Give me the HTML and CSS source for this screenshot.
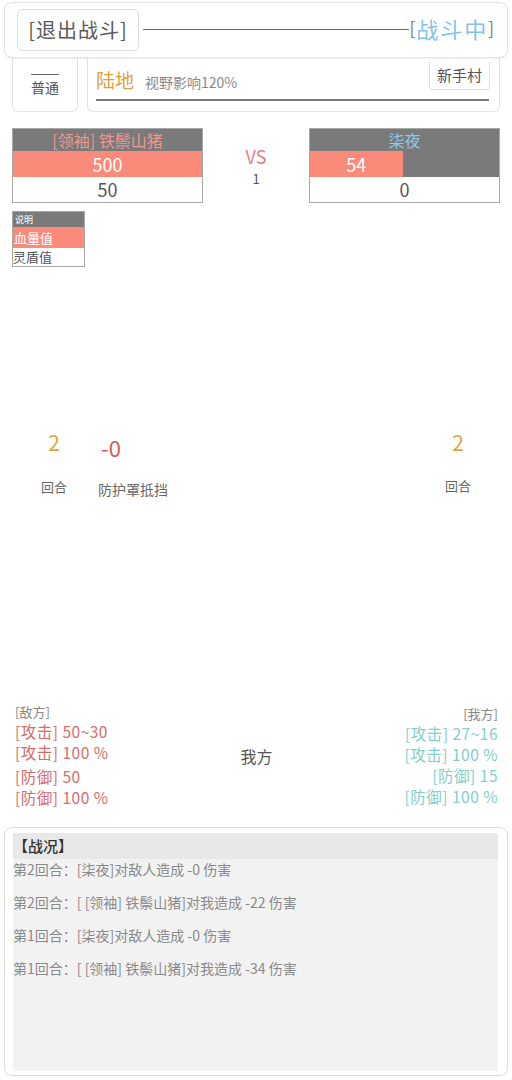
FILE: index.html
```html
<!DOCTYPE html>
<html lang="zh">
<head>
<meta charset="utf-8">
<title>战斗</title>
<link rel="stylesheet" href="styles.css">
</head>
<body>
<div class="page">
  <div class="top">
    <div class="exit">[退出战斗]</div>
    <div class="rule"></div>
    <div class="status"><span class="br">[</span><span class="fighting">战斗中</span><span class="br">]</span></div>
  </div>

  <div class="info">
    <div class="mode"><span class="mode-t">普通</span></div>
    <div class="terrain">
      <div class="terrain-row">
        <span class="land">陆地</span>
        <span class="vis">视野影响120%</span>
        <span class="village">新手村</span>
      </div>
      <div class="terrain-line"></div>
    </div>
  </div>

  <div class="bars">
    <div class="unit">
      <div class="u-name enemy-name">[领袖] 铁鬃山猪</div>
      <div class="u-hp"><div class="hp-fill" style="width:100%">500</div></div>
      <div class="u-sh">50</div>
    </div>
    <div class="vs">
      <div class="vs-t">VS</div>
      <div class="vs-n">1</div>
    </div>
    <div class="unit">
      <div class="u-name self-name">柒夜</div>
      <div class="u-hp"><div class="hp-fill" style="width:49%">54</div></div>
      <div class="u-sh">0</div>
    </div>
  </div>

  <div class="legend">
    <div class="lg-head">说明</div>
    <div class="lg-hp">血量值</div>
    <div class="lg-sh">灵盾值</div>
  </div>

  <div class="arena">
    <div class="a-col a-left">
      <div class="a-num">2</div>
      <div class="a-lab">回合</div>
    </div>
    <div class="a-col a-mid">
      <div class="a-dmg">-0</div>
      <div class="a-lab">防护罩抵挡</div>
    </div>
    <div class="a-col a-right">
      <div class="a-num">2</div>
      <div class="a-lab">回合</div>
    </div>
  </div>

  <div class="stats">
    <div class="st-col st-enemy">
      <div class="st-head">[敌方]</div>
      <div class="st-row">[攻击] 50~30</div>
      <div class="st-row">[攻击] 100 %</div>
      <div class="st-row st-gap">[防御] 50</div>
      <div class="st-row">[防御] 100 %</div>
    </div>
    <div class="st-mid">我方</div>
    <div class="st-col st-self">
      <div class="st-head">[我方]</div>
      <div class="st-row">[攻击] 27~16</div>
      <div class="st-row">[攻击] 100 %</div>
      <div class="st-row">[防御] 15</div>
      <div class="st-row">[防御] 100 %</div>
    </div>
  </div>

  <div class="log">
    <div class="log-inner">
      <div class="log-head">【战况】</div>
      <div class="log-line">第2回合：[柒夜]对敌人造成 -0 伤害</div>
      <div class="log-line">第2回合：[ [领袖] 铁鬃山猪]对我造成 -22 伤害</div>
      <div class="log-line">第1回合：[柒夜]对敌人造成 -0 伤害</div>
      <div class="log-line">第1回合：[ [领袖] 铁鬃山猪]对我造成 -34 伤害</div>
    </div>
  </div>
</div>
</body>
</html>
```

FILE: styles.css
```css
* { box-sizing: border-box; }
html, body { margin: 0; padding: 0; background: #fff; }
body {
  font-family: "Noto Sans CJK SC", "Noto Sans", sans-serif;
  color: #555;
  width: 512px;
}
.page { width: 512px; padding-top: 2px; }

/* header */
.top {
  margin: 0 4px 0 4px;
  height: 56px;
  border: 1px solid #e2e2e2;
  border-radius: 8px;
  box-shadow: 0 1px 2px rgba(0,0,0,0.06);
  display: flex;
  align-items: center;
  padding: 0 13px 0 12px;
  position: relative;
  z-index: 2;
  background: #fff;
}
.exit {
  width: 122px;
  height: 42px;
  border: 1px solid #dedede;
  border-radius: 6px;
  font-size: 20px;
  line-height: 40px;
  text-align: center;
  color: #5a5a5a;
  letter-spacing: 1px;
}
.rule {
  flex: 1;
  height: 1px;
  background: #6a6a6a;
  margin-left: 4px;
  margin-top: -2px;
}
.status { font-size: 22px; line-height: 30px; display: flex; align-items: center; margin-top: -4px; }
.status .br { color: #777; font-size: 17px; }
.fighting { color: #84c3e8; letter-spacing: 2px; margin-left: 1px; }

/* info row */
.info {
  display: flex;
  padding: 0 12px;
  gap: 9px;
  height: 54px;
}
.mode {
  width: 66px;
  border: 1px solid #e3e3e3;
  border-top: none;
  border-radius: 0 0 6px 6px;
  display: flex;
  justify-content: center;
  padding-top: 16px;
}
.mode-t {
  align-self: flex-start;
  font-size: 14px;
  line-height: 18px;
  padding-top: 3px;
  border-top: 1px solid #666;
  color: #555;
}
.terrain {
  flex: 1;
  border: 1px solid #e3e3e3;
  border-top: none;
  border-radius: 0 0 6px 6px;
  padding: 0 9px 0 8px;
}
.terrain-row { display: flex; align-items: flex-start; height: 38px; }
.land {
  color: #dca13c;
  font-size: 19px;
  line-height: 24px;
  margin-top: 10px;
}
.vis {
  color: #888;
  font-size: 14px;
  line-height: 18px;
  margin-top: 15px;
  margin-left: 11px;
}
.village {
  margin-left: auto;
  margin-top: 4px;
  width: 61px;
  height: 28px;
  border: 1px solid #e0e0e0;
  border-top: none;
  border-radius: 0 0 4px 4px;
  font-size: 15px;
  line-height: 26px;
  text-align: center;
  color: #555;
}
.terrain-line {
  height: 2px;
  background: #7a7a7a;
  margin-top: 3px;
  margin-right: 1px;
}

/* bars */
.bars {
  display: flex;
  padding: 0 12px;
  margin-top: 16px;
}
.unit {
  width: 191px;
  border: 1px solid #a8a8a8;
}
.u-name {
  height: 22px;
  background: #7a7a7a;
  font-size: 16px;
  line-height: 22px;
  text-align: center;
}
.enemy-name { color: #f0958f; }
.self-name { color: #8fc8ee; }
.u-hp {
  height: 26px;
  background: #7a7a7a;
}
.hp-fill {
  height: 26px;
  background: #fa8b7a;
  color: #fff;
  font-size: 18px;
  line-height: 26px;
  text-align: center;
}
.u-sh {
  height: 25px;
  background: #fff;
  color: #555;
  font-size: 18px;
  line-height: 25px;
  text-align: center;
}
.vs { flex: 1; text-align: center; padding-top: 17px; }
.vs-t { color: #e27f84; font-size: 18px; line-height: 22px; }
.vs-n { color: #555; font-size: 13px; line-height: 18px; margin-top: 3px; }

/* legend */
.legend {
  width: 73px;
  margin: 8px 0 0 12px;
  border: 1px solid #a8a8a8;
}
.lg-head {
  height: 15px;
  background: #7a7a7a;
  color: #fff;
  font-size: 9px;
  line-height: 15px;
  padding-left: 2px;
}
.lg-hp {
  height: 21px;
  background: #fa8b7a;
  color: #fff;
  font-size: 13px;
  line-height: 21px;
  padding-left: 1px;
}
.lg-sh {
  height: 18px;
  background: #fff;
  color: #555;
  font-size: 13px;
  line-height: 18px;
}

/* arena */
.arena {
  display: flex;
  margin-top: 161px;
  height: 270px;
}
.a-col { display: flex; flex-direction: column; }
.a-left { width: 108px; align-items: center; }
.a-mid { flex: 1; align-items: flex-start; margin-left: -10px; }
.a-right { width: 108px; align-items: center; }
.a-num { color: #e0a53e; font-size: 21px; line-height: 28px; height: 28px; }
.a-dmg { color: #d35c5c; font-size: 22px; line-height: 28px; height: 28px; margin-top: 5px; margin-left: 3px; }
.a-lab { color: #666; font-size: 13px; line-height: 20px; margin-top: 21px; }
.a-mid .a-lab { margin-top: 18px; font-size: 14px; }
.a-right .a-lab { margin-top: 20px; }

/* stats */
.stats {
  display: flex;
  padding: 0 14px 0 15px;
  margin-top: 5px;
}
.st-col { width: 150px; }
.st-head { font-size: 13px; line-height: 18px; color: #888; }
.st-row { font-size: 15.5px; line-height: 21px; letter-spacing: 0.5px; white-space: nowrap; }
.st-enemy .st-row { color: #d86c6c; }
.st-enemy .st-row:first-of-type { margin-top: 1px; }
.st-gap { margin-top: 3px; }
.st-self { text-align: right; padding-top: 2px; }
.st-self .st-row { color: #82cfcb; }
.st-mid {
  flex: 1;
  text-align: center;
  font-size: 16px;
  line-height: 22px;
  color: #555;
  padding-top: 42px;
}

/* log */
.log {
  margin: 19px 4px 0 4px;
  height: 249px;
  border: 1px solid #dcdcdc;
  border-radius: 8px;
  padding: 5px 9px 4px 8px;
  box-shadow: 0 1px 2px rgba(0,0,0,0.05);
}
.log-inner {
  height: 238px;
  background: #f2f2f2;
}
.log-head {
  height: 26px;
  background: #e8e8e8;
  color: #333;
  font-size: 15px;
  font-weight: 500;
  line-height: 26px;
}
.log-line {
  font-size: 14px;
  line-height: 20px;
  color: #8a8a8a;
  margin-bottom: 13px;
}
```
